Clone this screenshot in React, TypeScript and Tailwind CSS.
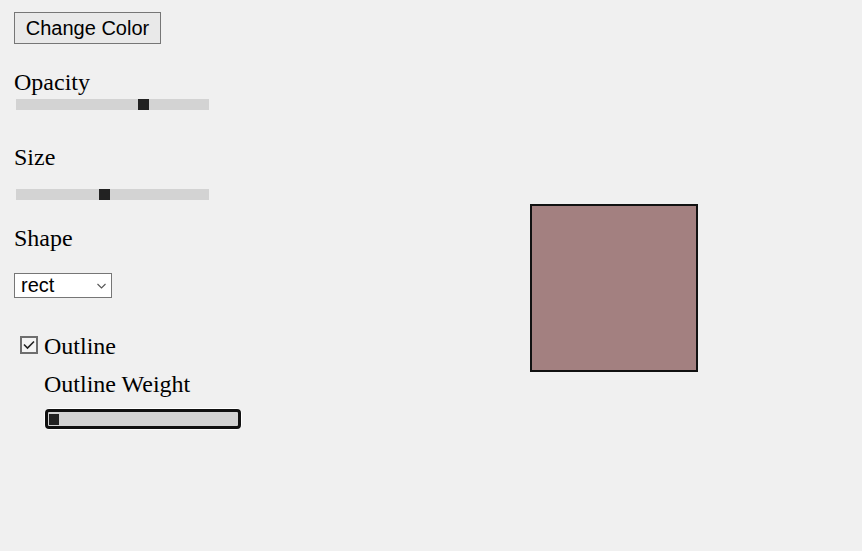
import React from "react";

const serif = { fontFamily: '"Liberation Serif", "Times New Roman", serif' };

function Track({ thumbLeft }: { thumbLeft: number }) {
  return (
    <div className="relative ml-[2px] h-[11px] w-[193px] bg-[#d3d3d3]">
      <div className="absolute top-0 h-[11px] w-[11px] bg-[#222222]" style={{ left: thumbLeft }} />
    </div>
  );
}

export default function App() {
  return (
    <div className="flex h-[551px] w-[862px] bg-[#f0f0f0] text-black" style={serif}>
      <div className="flex w-[365px] flex-col items-start pl-[14px] pt-[12px]">
        <button
          className="h-[32px] w-[147px] border border-[#767676] bg-[#e9e9e9] text-[20px] leading-[30px] text-black"
          style={{ fontFamily: '"Liberation Sans", Arial, sans-serif' }}
        >
          Change Color
        </button>
        <div className="mt-[24px] text-[24px] leading-[28px]">Opacity</div>
        <div className="mt-[3px]">
          <Track thumbLeft={122} />
        </div>
        <div className="mt-[33px] text-[24px] leading-[28px]">Size</div>
        <div className="mt-[18px]">
          <Track thumbLeft={83} />
        </div>
        <div className="mt-[24px] text-[24px] leading-[28px]">Shape</div>
        <div
          className="relative mt-[21px] flex h-[25px] w-[98px] items-center border border-[#767676] bg-white pl-[6px] text-[20px] leading-[23px]"
          style={{ fontFamily: '"Liberation Sans", Arial, sans-serif' }}
        >
          rect
          <svg className="absolute right-[5px] top-[9px]" width="9" height="6" viewBox="0 0 9 6">
            <path d="M0.5 1 L4.5 5 L8.5 1" fill="none" stroke="#555" strokeWidth="1.1" />
          </svg>
        </div>
        <div className="mt-[34px] flex h-[28px] items-center pl-[6px]">
          <div className="relative mb-[3px] h-[18px] w-[18px] border-2 border-[#6e6e6e] bg-[#f4f4f4]">
            <svg className="absolute left-[1px] top-[2px]" width="12" height="10" viewBox="0 0 12 10">
              <path d="M1 4.5 L4.5 8 L11 1.5" fill="none" stroke="#222" strokeWidth="1.6" />
            </svg>
          </div>
          <span className="ml-[6px] text-[24px] leading-[28px]">Outline</span>
        </div>
        <div className="ml-[30px] mt-[10px] text-[24px] leading-[28px]">Outline Weight</div>
        <div className="ml-[30px] mt-[10px] rounded-[6px] border border-white">
          <div className="flex h-[20px] w-[196px] items-center rounded-[4px] border-[3px] border-[#111] bg-[#d3d3d3] pl-[1px]">
            <div className="h-[11px] w-[10px] bg-[#222]" />
          </div>
        </div>
      </div>
      <div className="flex-1 pl-[165px] pt-[204px]">
        <div className="h-[168px] w-[168px] border-2 border-[#111] bg-[#a38080]" />
      </div>
    </div>
  );
}
